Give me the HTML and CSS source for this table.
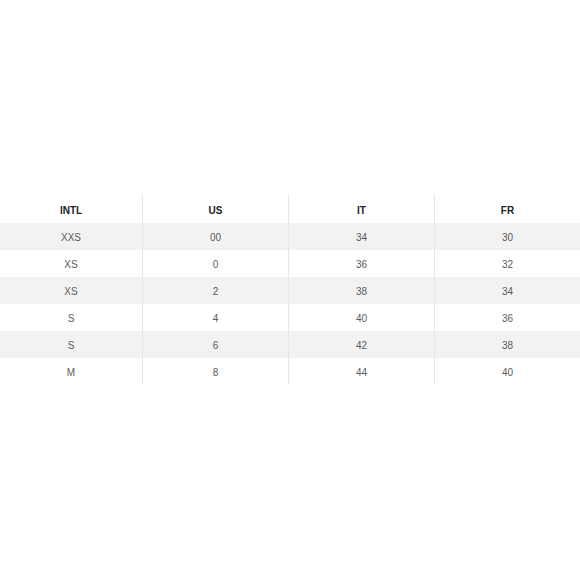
FILE: index.html
```html
<!DOCTYPE html>
<html>
<head>
<meta charset="utf-8">
<link rel="stylesheet" href="styles.css">
</head>
<body>
<div class="size-table">
  <div class="row head">
    <div class="cell">INTL</div><div class="cell">US</div><div class="cell">IT</div><div class="cell">FR</div>
  </div>
  <div class="row alt">
    <div class="cell">XXS</div><div class="cell">00</div><div class="cell">34</div><div class="cell">30</div>
  </div>
  <div class="row">
    <div class="cell">XS</div><div class="cell">0</div><div class="cell">36</div><div class="cell">32</div>
  </div>
  <div class="row alt">
    <div class="cell">XS</div><div class="cell">2</div><div class="cell">38</div><div class="cell">34</div>
  </div>
  <div class="row">
    <div class="cell">S</div><div class="cell">4</div><div class="cell">40</div><div class="cell">36</div>
  </div>
  <div class="row alt">
    <div class="cell">S</div><div class="cell">6</div><div class="cell">42</div><div class="cell">38</div>
  </div>
  <div class="row">
    <div class="cell">M</div><div class="cell">8</div><div class="cell">44</div><div class="cell">40</div>
  </div>
</div>
</body>
</html>
```
FILE: styles.css
```css
html, body {
  margin: 0;
  padding: 0;
  background: #ffffff;
}
body {
  padding-top: 194px;
  font-family: "Liberation Sans", Arial, sans-serif;
}
.size-table {
  width: 580px;
}
.row {
  display: grid;
  grid-template-columns: 142px 146px 146px 146px;
  height: 27px;
}
.row.head {
  height: 29px;
}
.row.alt {
  background: #f2f2f2;
}
.cell {
  display: flex;
  align-items: center;
  justify-content: center;
  font-size: 10px;
  color: #5a5a5a;
  padding-top: 1px;
}
.cell + .cell {
  border-left: 1px solid #e6e6e6;
}
.head .cell {
  font-weight: bold;
  color: #222222;
  padding-top: 4px;
}
```
